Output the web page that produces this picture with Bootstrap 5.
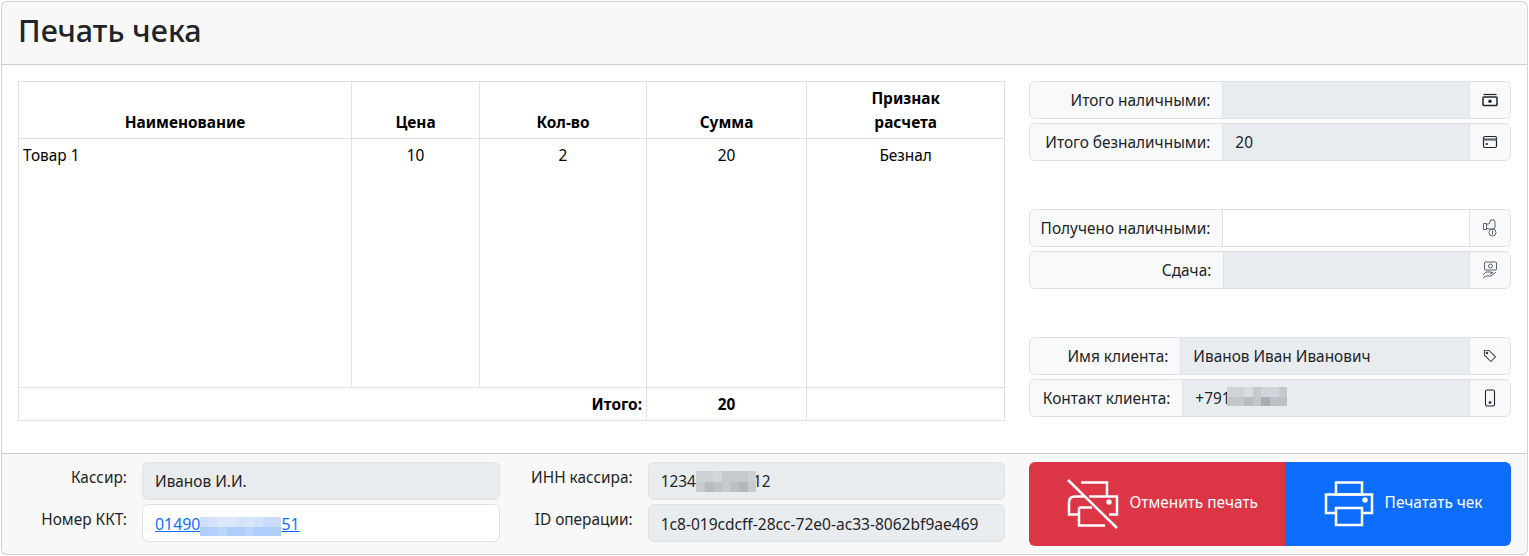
<!DOCTYPE html>
<html lang="ru">
<head>
  <meta charset="UTF-8" />
  <meta name="viewport" content="width=device-width, initial-scale=1.0"/>
  <title>Печать чека</title>
  <link href="https://cdn.jsdelivr.net/npm/bootstrap@5.3.2/dist/css/bootstrap.min.css" rel="stylesheet" />
  <style>
    body {
      font-family: "Noto Sans", "Open Sans", sans-serif;
      padding: 1px;
      overflow: hidden;
    }
    .card, .form-control, .input-group-text { font-size: 15.4px; line-height: 24px; }
    .form-control, .input-group-text { padding-top: 7px; padding-bottom: 5px; }
    .card-header { padding-top: 9px; padding-bottom: 15px; }
    .card-header h2 { font-size: 30.5px; line-height: 38.4px; }
    .receipt { table-layout: fixed; width: 100%; height: 340px; color: #000; }
    .receipt th { vertical-align: bottom; text-align: center; padding-top: 5px; padding-bottom: 3px; }
    .receipt td { text-align: center; padding-top: 5px; padding-bottom: 3px; }
    .receipt .item-row { height: 249px; }
    .receipt .total-row td { vertical-align: middle; font-weight: 700; }
    .col-name { width: 333px; }
    .col-price { width: 128px; }
    .col-qty { width: 167px; }
    .col-sum { width: 160px; }
    .input-group-text.lbl { justify-content: flex-end; }
    .lbl-wide { width: 194px; }
    .lbl-wide2 { width: 195px; }
    .lbl-name { width: 152px; }
    .lbl-contact { width: 154px; }
    .addon { width: 42px; justify-content: center; padding: 0; }
    .spacer { height: 48px; }
    .field { background: #e9ecef; }
    .foot-label { width: 109px; padding-top: 4px; text-align: right; flex: none; margin-right: 15px; }
    .foot-field { height: 38px; }
    .foot-field a { color: #0d6efd; font-size: 15.9px; }
    .foot-id { font-size: 15.55px; }
    .mosaic { vertical-align: -6px; }
    .mosaic-inn { vertical-align: -5px; position: relative; margin-right: -3px; }
    .mosaic-phone { margin-bottom: 5px; margin-left: -4px; position: relative; }
    .pay-btn { height: 84px; border: 0; display: flex; align-items: center; justify-content: center; gap: 11px; padding: 0 0 0 10px; color: #fff; }
    .pay-btn span { margin-bottom: 2px; }
    .btn-cancel { width: 256px; background: #dc3545; border-radius: 6px 0 0 6px; }
    .btn-print { width: 226px; background: #0d6efd; border-radius: 0 6px 6px 0; }
  </style>
</head>
<body>
  <div class="card">
    <div class="card-header">
      <h2 class="mb-0">Печать чека</h2>
    </div>
    <div class="card-body">
      <div class="row mb-3">
        <div class="col-8">
          <table class="table table-bordered table-sm mb-0 receipt">
            <colgroup>
              <col class="col-name"><col class="col-price"><col class="col-qty"><col class="col-sum"><col>
            </colgroup>
            <thead>
              <tr>
                <th>Наименование</th>
                <th>Цена</th>
                <th>Кол-во</th>
                <th>Сумма</th>
                <th>Признак<br>расчета</th>
              </tr>
            </thead>
            <tbody>
              <tr class="item-row">
                <td class="text-start">Товар 1</td>
                <td>10</td>
                <td>2</td>
                <td>20</td>
                <td>Безнал</td>
              </tr>
              <tr class="total-row">
                <td colspan="3" class="text-end">Итого:</td>
                <td>20</td>
                <td></td>
              </tr>
            </tbody>
          </table>
        </div>
        <div class="col-4">
          <div class="input-group mb-1">
            <span class="input-group-text lbl lbl-wide">Итого наличными:</span>
            <input class="form-control" disabled value="">
            <span class="input-group-text addon">
              <svg width="16" height="16" viewBox="0 0 16 16" fill="none" stroke="#212529"><path d="M1.500 2.500h13" stroke-width="1.200"/><rect x="1" y="5" width="14" height="8.500" rx=".8" stroke-width="1.500"/><circle cx="8" cy="9.200" r="1.700" fill="#212529" stroke="none"/></svg>
            </span>
          </div>
          <div class="input-group">
            <span class="input-group-text lbl lbl-wide">Итого безналичными:</span>
            <input class="form-control" disabled value="20">
            <span class="input-group-text addon">
              <svg width="16" height="16" viewBox="0 0 16 16" fill="none" stroke="#212529"><rect x="1.500" y="2.500" width="13" height="11" rx="1.500" stroke-width="1.200"/><path d="M1.500 5.500h13" stroke-width="2.200" stroke="#5c636a"/><path d="M3.500 10h2.500" stroke-width="1.500"/></svg>
            </span>
          </div>
          <div class="spacer"></div>
          <div class="input-group mb-1">
            <span class="input-group-text lbl lbl-wide">Получено наличными:</span>
            <input class="form-control">
            <span class="input-group-text addon">
              <svg width="16" height="20" viewBox="0 0 16 20" fill="none" stroke="#495057" stroke-width=".9"><path d="M1.500 5.500h3v6h-3zM4.500 6.500l3-1 1-3.500h3.500l1 2v5l-1 2H7l-2.500-1"/><circle cx="10.500" cy="14.500" r="3.500"/><path d="M10.500 12.500v4"/></svg>
            </span>
          </div>
          <div class="input-group">
            <span class="input-group-text lbl lbl-wide2">Сдача:</span>
            <input class="form-control" disabled value="">
            <span class="input-group-text addon">
              <svg width="16" height="20" viewBox="0 0 16 20" fill="none" stroke="#495057" stroke-width=".9"><rect x="2.500" y="2" width="12" height="8" rx="1"/><circle cx="8.500" cy="6" r="2"/><path d="M1 15l3-3h4l3 .5-3 1.500M1 18l3-2h5l5-4"/></svg>
            </span>
          </div>
          <div class="spacer"></div>
          <div class="input-group mb-1">
            <span class="input-group-text lbl lbl-name">Имя клиента:</span>
            <input class="form-control" disabled value="Иванов Иван Иванович">
            <span class="input-group-text addon">
              <svg width="14" height="14" viewBox="0 0 16 16" fill="#212529"><path d="M6 4.500a1.500 1.500 0 1 1-3 0 1.500 1.500 0 0 1 3 0zm-1 0a.5.5 0 1 0-1 0 .5.5 0 0 0 1 0z"/><path d="M2 1h4.586a1 1 0 0 1 .707.293l7 7a1 1 0 0 1 0 1.414l-4.586 4.586a1 1 0 0 1-1.414 0l-7-7A1 1 0 0 1 1 6.586V2a1 1 0 0 1 1-1zm0 5.586 7 7L13.586 9l-7-7H2v4.586z"/></svg>
            </span>
          </div>
          <div class="input-group">
            <span class="input-group-text lbl lbl-contact">Контакт клиента:</span>
            <div class="form-control field d-flex align-items-center">+791<svg class="mosaic-phone" width="60" height="19" viewBox="0 0 60 19" shape-rendering="crispEdges"><rect width="60" height="10" fill="#d0d3d7"/><rect x="17" width="9" height="10" fill="#dadcdf"/><rect x="26" width="8" height="10" fill="#c6c9cd"/><rect x="52" width="8" height="10" fill="#c5c8cc"/><rect y="10" width="60" height="9" fill="#c3c6ca"/><rect x="17" y="10" width="9" height="9" fill="#b9bcc0"/><rect x="34" y="10" width="9" height="9" fill="#a9acb0"/><rect x="43" y="10" width="17" height="9" fill="#bcbfc5"/></svg></div>
            <span class="input-group-text addon">
              <svg width="16" height="18" viewBox="0 0 16 18" fill="none" stroke="#212529" stroke-width="1.100"><rect x="3.500" y="1" width="9" height="16" rx="1.500"/><circle cx="8" cy="13.500" r=".8" fill="#212529"/></svg>
            </span>
          </div>
        </div>
      </div>
    </div>
    <div class="card-footer">
      <div class="row">
        <div class="col-8">
          <div class="row">
            <div class="col-6">
              <div class="d-flex mb-1">
                <div class="foot-label">Кассир:</div>
                <div class="form-control field foot-field">Иванов И.И.</div>
              </div>
              <div class="d-flex">
                <div class="foot-label">Номер ККТ:</div>
                <div class="form-control foot-field text-nowrap"><a href="#">01490<svg class="mosaic" width="81" height="19" viewBox="0 0 81 19" shape-rendering="crispEdges"><rect width="81" height="10" fill="#d4e2fb"/><rect width="9" height="10" fill="#cfe0fb"/><rect x="18" width="18" height="10" fill="#dce7fb"/><rect x="45" width="9" height="10" fill="#d9e5fb"/><rect x="63" width="18" height="10" fill="#c9dcfb"/><rect y="10" width="81" height="9" fill="#afcdfb"/><rect x="9" y="10" width="9" height="9" fill="#b4d0fb"/><rect x="18" y="10" width="9" height="9" fill="#bcd5fb"/><rect x="45" y="10" width="9" height="9" fill="#b9d3fb"/></svg>51</a></div>
              </div>
            </div>
            <div class="col-6">
              <div class="d-flex mb-1">
                <div class="foot-label">ИНН кассира:</div>
                <div class="form-control field foot-field text-nowrap">1234<svg class="mosaic-inn" width="60" height="21" viewBox="0 0 60 21" shape-rendering="crispEdges"><rect width="60" height="11" fill="#cdd0d4"/><rect x="17" width="9" height="11" fill="#d3d5d8"/><rect x="26" width="26" height="11" fill="#c6c9cd"/><rect y="11" width="60" height="10" fill="#c8cbce"/><rect x="9" y="11" width="9" height="10" fill="#b9bcbf"/><rect x="18" y="11" width="8" height="10" fill="#c0c3c6"/><rect x="34" y="11" width="9" height="10" fill="#bcbfc3"/><rect x="43" y="11" width="9" height="10" fill="#b5b8bb"/></svg>12</div>
              </div>
              <div class="d-flex">
                <div class="foot-label">ID операции:</div>
                <div class="form-control field foot-field foot-id text-nowrap">1c8-019cdcff-28cc-72e0-ac33-8062bf9ae469</div>
              </div>
            </div>
          </div>
        </div>
        <div class="col-4 d-flex">
          <button class="pay-btn btn-cancel">
            <svg width="52" height="50" viewBox="0 0 52 50" fill="none" stroke="#fff" stroke-width="2.500"><path d="M1 1l49 48"/><path d="M14 3.500h26v14"/><path d="M17 17.500H8q-6 0-6 6v12h10"/><path d="M22 17.500h28v18h-8"/><path d="M12 28.500v18h26"/><path d="M12 28.500h13"/><circle cx="42" cy="23" r="2.700" fill="#fff" stroke="none"/></svg>
            <span>Отменить печать</span>
          </button>
          <button class="pay-btn btn-print">
            <svg width="50" height="46" viewBox="0 0 50 46" fill="none" stroke="#fff" stroke-width="2.500"><rect x="12" y="1.500" width="26" height="12"/><path d="M12 32H2V13.500H48V32H38"/><rect x="12" y="27" width="26" height="17"/><circle cx="41" cy="19" r="2.700" fill="#fff" stroke="none"/></svg>
            <span>Печатать чек</span>
          </button>
        </div>
      </div>
    </div>
  </div>
  <script src="https://cdn.jsdelivr.net/npm/bootstrap@5.3.2/dist/js/bootstrap.bundle.min.js"></script>
</body>
</html>
